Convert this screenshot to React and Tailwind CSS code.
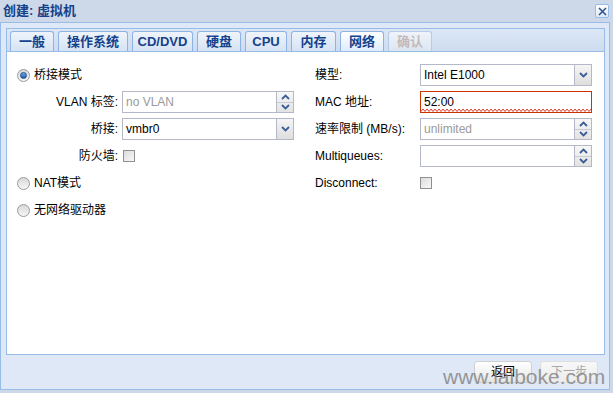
import React from "react";

const FONT = { fontFamily: '"Liberation Sans", "Noto Sans CJK SC", sans-serif' };

const TABS = [
	{ label: "一般", w: 44 },
	{ label: "操作系统", w: 70 },
	{ label: "CD/DVD", w: 61 },
	{ label: "硬盘", w: 44 },
	{ label: "CPU", w: 42 },
	{ label: "内存", w: 45 },
	{ label: "网络", w: 44, active: true },
	{ label: "确认", w: 44, disabled: true },
];

function Chevron({ up }) {
	return (
		<svg width="9" height="6" viewBox="0 0 9 6">
			<path
				d={up ? "M1 5 L4.5 1.5 L8 5" : "M1 1 L4.5 4.5 L8 1"}
				fill="none"
				stroke="#3b5f95"
				strokeWidth="1.8"
			/>
		</svg>
	);
}

function Radio({ checked }) {
	return (
		<span className="relative flex h-[13px] w-[13px] shrink-0 items-center justify-center rounded-full border border-[#9a9a9a] bg-gradient-to-b from-[#d8d8d8] to-[#f6f6f6]">
			{checked && (
				<span className="h-[7px] w-[7px] rounded-full border border-[#1e4f8f] bg-gradient-to-b from-[#6aa8e8] to-[#1d5ea8]" />
			)}
		</span>
	);
}

function Checkbox() {
	return (
		<span className="block h-[12px] w-[12px] border border-[#8f8f8f] bg-gradient-to-br from-[#dcdcdc] to-[#f8f8f8]" />
	);
}

function Field({ value, placeholder, trigger, invalid }) {
	return (
		<div
			className={
				"relative flex h-[22px] w-[172px] border bg-white " +
				(invalid ? "border-[#cc3300]" : "border-[#b5b8c8]")
			}
		>
			<div
				className={
					"flex flex-1 items-center px-[3px] text-[12px] " +
					(value ? "text-black" : "text-[#9a9a9a]")
				}
			>
				{value || placeholder}
			</div>
			{trigger === "combo" && (
				<div className="flex w-[17px] items-center justify-center border-l border-[#b5b8c8] bg-gradient-to-b from-[#f5f5f5] to-[#dedede]">
					<Chevron />
				</div>
			)}
			{trigger === "spin" && (
				<div className="flex w-[17px] flex-col border-l border-[#b5b8c8] bg-gradient-to-b from-[#f7f7f7] to-[#e3e3e3]">
					<div className="flex flex-1 items-center justify-center border-b border-[#c8cad6]">
						<Chevron up />
					</div>
					<div className="flex flex-1 items-center justify-center">
						<Chevron />
					</div>
				</div>
			)}
			{invalid && (
				<svg className="absolute bottom-0 left-0" width="170" height="3">
					<polyline
						points={Array.from({ length: 86 }, (_, i) => `${i * 2},${i % 2 ? 0 : 2.5}`).join(" ")}
						fill="none"
						stroke="#e03a2a"
						strokeWidth="1"
					/>
				</svg>
			)}
		</div>
	);
}

function Row({ label, align = "right", children }) {
	return (
		<div className="flex h-[22px] items-center">
			<div
				className={
					"w-[105px] shrink-0 text-[12px] text-black " +
					(align === "right" ? "pr-[4px] text-right" : "text-left")
				}
			>
				{label}
			</div>
			{children}
		</div>
	);
}

function RadioRow({ label, checked }) {
	return (
		<div className="flex h-[22px] items-center gap-[4px] text-[12px] text-black">
			<Radio checked={checked} />
			<span>{label}</span>
		</div>
	);
}

export default function App() {
	return (
		<div
			className="relative flex h-[393px] w-[613px] flex-col overflow-hidden bg-[#cdd9e8]"
			style={FONT}
		>
			<header className="flex h-[22px] items-center justify-between pl-[3px] pr-[4px]">
				<span className="text-[13px] font-bold text-[#15428b]">创建: 虚拟机</span>
				<span className="flex h-[14px] w-[14px] items-center justify-center rounded-[2px] border border-[#99bbe8] bg-gradient-to-b from-[#ffffff] to-[#dde8f6]">
					<svg width="9" height="9" viewBox="0 0 9 9">
						<path d="M1 1 L8 8 M8 1 L1 8" stroke="#2a4f8f" strokeWidth="1.5" />
					</svg>
				</span>
			</header>

			<div className="flex h-[368px] w-[610px] flex-col border border-[#99bbe8] bg-[#dfe8f6] px-[5px] pt-[5px]">
				<div className="flex h-[327px] w-[599px] flex-col">
					<div className="flex h-[23px] items-end gap-[4px] border border-b-0 border-[#99bbe8] bg-gradient-to-b from-[#dce7f5] to-[#cddcf0] pl-[3px]">
						{TABS.map((t) => (
							<div
								key={t.label}
								style={{ width: t.w }}
								className={
									"flex h-[20px] items-center justify-center rounded-t-[3px] border border-b-0 text-[13px] font-bold " +
									(t.active
										? "border-[#8db2e3] bg-gradient-to-b from-[#ffffff] to-[#deecfd] text-[#15428b]"
										: t.disabled
											? "border-[#b6cbe6] bg-gradient-to-b from-[#f0f4fa] to-[#dbe5f2] text-[#c4b9b9]"
											: "border-[#8db2e3] bg-gradient-to-b from-[#eff4fb] to-[#d6e3f4] text-[#15428b]")
								}
							>
								{t.label}
							</div>
						))}
					</div>
					<div className="flex flex-1 gap-[20px] border border-[#99bbe8] bg-white pl-[10px] pt-[12px]">
						<div className="flex w-[278px] flex-col gap-[5px]">
							<RadioRow label="桥接模式" checked />
							<Row label="VLAN 标签:">
								<Field placeholder="no VLAN" trigger="spin" />
							</Row>
							<Row label="桥接:">
								<Field value="vmbr0" trigger="combo" />
							</Row>
							<Row label="防火墙:">
								<span className="pl-[1px]">
									<Checkbox />
								</span>
							</Row>
							<RadioRow label="NAT模式" />
							<RadioRow label="无网络驱动器" />
						</div>
						<div className="flex w-[277px] flex-col gap-[5px]">
							<Row label="模型:" align="left">
								<Field value="Intel E1000" trigger="combo" />
							</Row>
							<Row label="MAC 地址:" align="left">
								<Field value="52:00" invalid />
							</Row>
							<Row label="速率限制 (MB/s):" align="left">
								<Field placeholder="unlimited" trigger="spin" />
							</Row>
							<Row label="Multiqueues:" align="left">
								<Field trigger="spin" />
							</Row>
							<Row label="Disconnect:" align="left">
								<Checkbox />
							</Row>
						</div>
					</div>
				</div>

				<div className="flex justify-end gap-[8px] pr-[6px] pt-[6px]">
					<button className="h-[22px] w-[58px] rounded-[3px] border border-[#d0d0d0] bg-gradient-to-b from-[#ffffff] to-[#e6e6e6] text-[12px] text-black">
						返回
					</button>
					<button className="h-[22px] w-[58px] rounded-[3px] border border-[#dedede] bg-gradient-to-b from-[#f8f8f8] to-[#ececec] text-[12px] text-[#a8a8a8]">
						下一步
					</button>
				</div>
			</div>

			<div className="pointer-events-none absolute left-[443px] top-[366px] text-[21px] leading-none text-[#7a7a7a] opacity-75">
				www.laiboke.com
			</div>
		</div>
	);
}
